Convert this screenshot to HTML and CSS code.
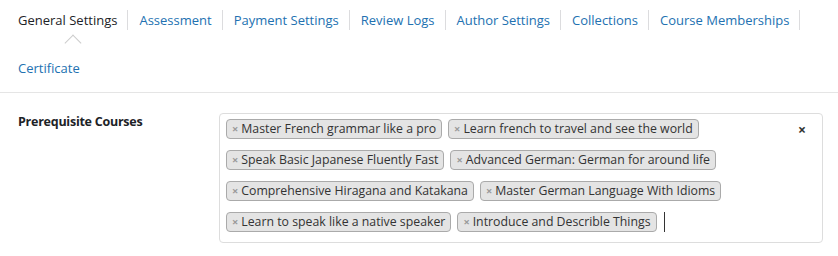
FILE: index.html
```html
<!DOCTYPE html>
<html lang="en">
<head>
    <meta charset="UTF-8">
    <title>Course Settings</title>
    <link rel="stylesheet" href="styles.css">
</head>
<body>
<ul class="settings-tabs">
    <li class="tab active"><a href="#">General Settings</a></li>
    <li class="tab"><a href="#">Assessment</a></li>
    <li class="tab"><a href="#">Payment Settings</a></li>
    <li class="tab"><a href="#">Review Logs</a></li>
    <li class="tab"><a href="#">Author Settings</a></li>
    <li class="tab"><a href="#">Collections</a></li>
    <li class="tab"><a href="#">Course Memberships</a></li>
    <li class="tab last"><a href="#">Certificate</a></li>
</ul>

<div class="field-row">
    <label class="field-label">Prerequisite Courses</label>
    <div class="multi-select">
        <ul class="choices">
            <li class="choice"><span class="choice-remove">×</span>Master French grammar like a pro</li>
            <li class="choice"><span class="choice-remove">×</span>Learn french to travel and see the world</li>
            <li class="choice"><span class="choice-remove">×</span>Speak Basic Japanese Fluently Fast</li>
            <li class="choice"><span class="choice-remove">×</span>Advanced German: German for around life</li>
            <li class="choice"><span class="choice-remove">×</span>Comprehensive Hiragana and Katakana</li>
            <li class="choice"><span class="choice-remove">×</span>Master German Language With Idioms</li>
            <li class="choice"><span class="choice-remove">×</span>Learn to speak like a native speaker</li>
            <li class="choice"><span class="choice-remove">×</span>Introduce and Describle Things</li>
            <li class="caret"></li>
        </ul>
        <span class="clear-all">×</span>
    </div>
</div>
</body>
</html>
```

FILE: styles.css
```css
body {
    margin: 0;
    background: #fff;
    font-family: "Open Sans", Arial, sans-serif;
    font-size: 13px;
    color: #32373c;
}

.settings-tabs {
    list-style: none;
    margin: 0;
    padding: 10px 18px 14px;
    display: flex;
    flex-wrap: wrap;
    row-gap: 28px;
    border-bottom: 1px solid #e5e5e5;
}

.tab {
    position: relative;
    padding: 0 10px 0 11px;
    line-height: 20px;
    border-right: 1px solid #dcdcde;
}

.tab:first-child {
    padding-left: 0;
}

.tab.last {
    padding-left: 0;
    border-right: none;
}

.tab a {
    color: #2271b1;
    text-decoration: none;
}

.tab.active a {
    color: #1d2327;
}

.tab.active::after {
    content: "";
    position: absolute;
    top: 100%;
    left: 50%;
    width: 11px;
    height: 11px;
    margin: 7px 0 0 -6px;
    border-top: 1px solid #ccc;
    border-left: 1px solid #ccc;
    transform: rotate(45deg);
}

.field-row {
    display: grid;
    grid-template-columns: 201px 1fr;
    padding: 20px 15px 13px 18px;
}

.field-label {
    font-weight: bold;
    font-size: 12.5px;
    letter-spacing: -0.25px;
    color: #1d2327;
    line-height: 18px;
}

.multi-select {
    position: relative;
    border: 1px solid #ddd;
    border-radius: 4px;
    padding: 5px 40px 10px 6px;
}

.choices {
    list-style: none;
    margin: 0;
    padding: 0;
    display: flex;
    flex-wrap: wrap;
    align-items: center;
    gap: 11px 6px;
}

.choice {
    height: 18px;
    background: #e4e4e4;
    border: 1px solid #aaa;
    border-radius: 4px;
    padding: 0 5px;
    font-size: 12.3px;
    line-height: 18px;
    color: #333;
}

.choice-remove {
    color: #999;
    font-weight: bold;
    font-size: 11px;
    line-height: 1;
    margin-right: 3px;
}

.caret {
    width: 1px;
    height: 20px;
    margin-left: 1px;
    background: #333;
}

.clear-all {
    position: absolute;
    top: 6px;
    right: 16px;
    font-weight: bold;
    font-size: 14px;
    color: #333;
}
```
